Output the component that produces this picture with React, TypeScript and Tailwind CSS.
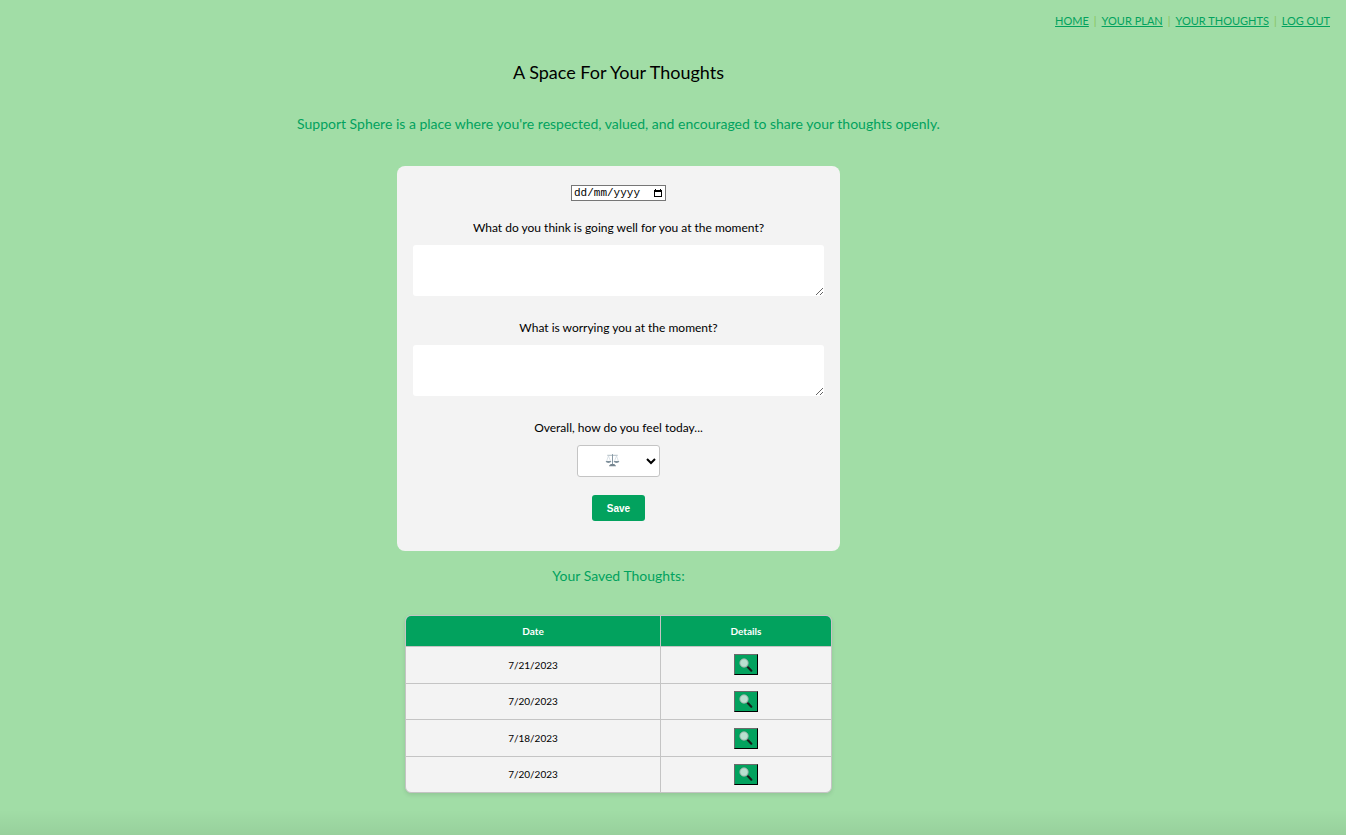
const links = ["HOME", "YOUR PLAN", "YOUR THOUGHTS", "LOG OUT"];
const dates = ["7/21/2023", "7/20/2023", "7/18/2023", "7/20/2023"];

function CalendarIcon() {
  return (
    <svg viewBox="0 0 8 8" className="size-2" aria-hidden="true">
      <path d="M1 0h1v1h4V0h1v1h1v7H0V1h1zM1 3v4h6V3z" fill="#000" fillRule="evenodd" />
    </svg>
  );
}

function ScalesIcon() {
  return (
    <svg
      viewBox="0 0 26 26"
      className="pointer-events-none absolute left-7 top-2 size-[15px]"
      fill="none"
      aria-hidden="true"
    >
      <path d="M4 4h18" stroke="#a9b6be" strokeWidth="1.6" />
      <path d="M13 2v19" stroke="#8799a5" strokeWidth="1.8" />
      <path d="M6 5 2.5 15M6 5l4 10M20 5l-4 10M20 5l3.500 10" stroke="#ccd6dd" strokeWidth="1.2" />
      <path d="M1 14h10q-1 3.500-5 3.500T1 14zM15 14h10q-1 3.500-5 3.500T15 14z" fill="#7f909b" />
      <path d="M10 19h6l3 3v1H7v-1z" fill="#75858f" />
    </svg>
  );
}

function MagnifierIcon() {
  return (
    <svg viewBox="0 0 14 14" className="size-[14px]" fill="none" aria-hidden="true">
      <path d="m7.500 7.800 1.800 1.800" stroke="#8b9696" strokeWidth="1.400" />
      <path d="m9 9.300 3.300 3.400" stroke="#161c1a" strokeWidth="2.200" strokeLinecap="round" />
      <circle cx="5" cy="5" r="4.200" fill="#b9e0d0" stroke="#96aaa3" strokeWidth="0.900" />
    </svg>
  );
}

function Question({ id, text }: { id: string; text: string }) {
  return (
    <div className="mb-[22px] flex w-full flex-col">
      <label htmlFor={id} className="mb-[7px] text-center text-xs leading-5">
        {text}
      </label>
      <textarea id={id} className="block h-[51px] w-full resize rounded-[3px] bg-white p-2 text-xs outline-none" />
    </div>
  );
}

export default function App() {
  return (
    <div className="flex min-h-screen flex-col bg-[#a1dda6] font-['Lato','Liberation_Sans',sans-serif] text-black">
      <nav className="flex h-[42px] items-center justify-end gap-[5px] px-4 text-[11px] text-[#8ac45c]">
        {links.map((link, i) => (
          <span key={link} className="flex gap-[5px]">
            {i > 0 && <span>|</span>}
            <a href="#" className="text-[#02a25e] underline">
              {link}
            </a>
          </span>
        ))}
      </nav>

      <main className="flex w-[91.9%] flex-col items-center">
        <h1 className="text-lg leading-[60px]">A Space For Your Thoughts</h1>
        <p className="mb-5 text-center text-sm leading-[44px] text-[#02a25e]">
          Support Sphere is a place where you're respected, valued, and encouraged to share your thoughts openly.
        </p>

        <form className="flex w-full max-w-[443px] flex-col items-center rounded-lg bg-[#f3f3f3] px-4 pb-[30px] pt-[19px]">
          <div className="mb-[17px] flex h-4 w-[95px] items-center border border-[#767676] bg-white pl-0.5 pr-[3px]">
            <input
              type="text"
              aria-label="Date"
              placeholder="dd/mm/yyyy"
              className="h-full min-w-0 flex-1 font-['Liberation_Mono',monospace] text-[11px] leading-[14px] outline-none placeholder:text-black"
            />
            <button type="button" aria-label="Open calendar">
              <CalendarIcon />
            </button>
          </div>

          <Question id="well" text="What do you think is going well for you at the moment?" />
          <Question id="worry" text="What is worrying you at the moment?" />

          <label htmlFor="mood" className="mb-[7px] text-xs leading-5">
            Overall, how do you feel today...
          </label>
          <div className="relative mb-[18px] h-8 w-[83px]">
            <select id="mood" className="size-full appearance-none rounded-[3px] border border-[#c4c4c4] bg-white">
              <option value="balanced" aria-label="Balanced"></option>
            </select>
            <ScalesIcon />
            <svg
              viewBox="0 0 10 7"
              className="pointer-events-none absolute right-1 top-[13px] h-[7px] w-[10px]"
              fill="none"
              aria-hidden="true"
            >
              <path d="m1 1 4 4 4-4" stroke="#000" strokeWidth="2" />
            </svg>
          </div>
          <button
            type="button"
            className="h-[26px] w-[53px] rounded-[3px] bg-[#02a25e] font-['Liberation_Sans',sans-serif] text-[10px] font-bold text-white"
          >
            Save
          </button>
        </form>

        <h2 className="mb-[15px] text-sm leading-[49px] text-[#02a25e]">Your Saved Thoughts:</h2>

        <div className="w-full max-w-[427px] overflow-hidden rounded-md border border-[#c4c4c4] bg-[#f3f3f3] shadow-[0_2px_4px_rgba(0,0,0,0.1)]">
          <table className="h-[176px] w-full table-fixed border-separate border-spacing-0 text-center text-[10px] leading-4">
            <thead className="bg-[#02a25e] text-white">
              <tr>
                <th className="h-[31px] w-[60%] border-b border-r border-[#c4c4c4]">Date</th>
                <th className="w-[40%] border-b border-[#c4c4c4]">Details</th>
              </tr>
            </thead>
            <tbody className="[&>tr:last-child>td]:border-b-0">
              {dates.map((date, i) => (
                <tr key={i}>
                  <td className="border-b border-r border-[#c4c4c4]">{date}</td>
                  <td className="border-b border-[#c4c4c4]">
                    <button
                      type="button"
                      aria-label={`View details for ${date}`}
                      className="mx-auto flex h-[21px] w-6 items-center border border-b-black border-l-[#6b6b6b] border-r-black border-t-[#6b6b6b] bg-[#02a25e] pl-1"
                    >
                      <MagnifierIcon />
                    </button>
                  </td>
                </tr>
              ))}
            </tbody>
          </table>
        </div>
      </main>

      <div className="mt-auto h-[25px] bg-linear-to-b from-transparent to-black/6" />
    </div>
  );
}
